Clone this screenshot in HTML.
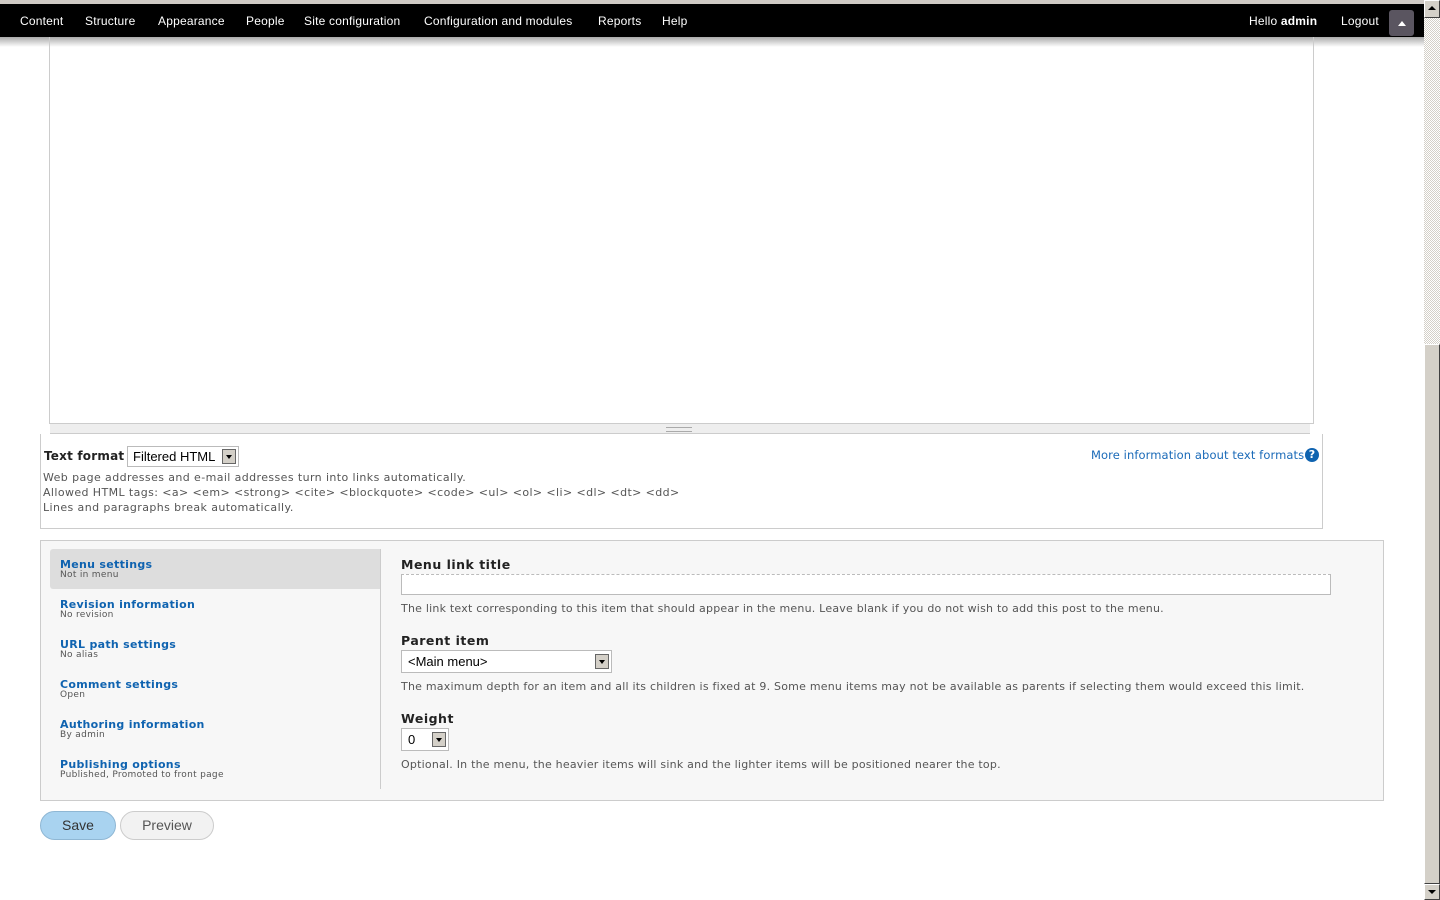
<!DOCTYPE html>
<html><head><style>
body{margin:0;width:1440px;height:900px;overflow:hidden;background:#fff;font-family:"DejaVu Sans","Liberation Sans",sans-serif;position:relative}
.a{position:absolute}
#tb{left:0;top:0;width:1424px;height:37px;background:#000;border-top:4px solid #cfcac5;box-sizing:border-box}
#tb span{position:absolute;top:10px;color:#fff;font-size:12px;font-family:"Liberation Sans",sans-serif;letter-spacing:.2px}
.sh{left:0;top:37px;width:1424px;height:10px;background:linear-gradient(#aaa,#fff)}
.desc{font-size:11px;color:#555;letter-spacing:.4px}
.d2{letter-spacing:.22px}
.tab b{display:block;color:#0f63b0;font-size:11px;letter-spacing:.3px}
.tab i{display:block;font-style:normal;font-size:9px;color:#555;line-height:9px;letter-spacing:.3px}
.lbl{font-size:12.5px;font-weight:bold;color:#222;letter-spacing:.5px}
.sel{border:1px solid #bbb;background:#fff;font-family:"Liberation Sans",sans-serif;font-size:13px;box-sizing:border-box}
.arr{position:absolute;right:2px;top:2px;width:14px;height:15px;background:#d4d0c8;border:1px solid #666;box-sizing:border-box}
.arr:after{content:"";position:absolute;left:3px;top:5px;border:3px solid transparent;border-top:4px solid #000}
</style></head><body>
<div id="tb" class="a">
<span style="left:20px">Content</span><span style="left:85px">Structure</span><span style="left:158px">Appearance</span><span style="left:246px">People</span><span style="left:304px">Site configuration</span><span style="left:424px">Configuration and modules</span><span style="left:598px">Reports</span><span style="left:662px">Help</span>
<span style="left:1249px">Hello <b>admin</b></span><span style="left:1341px">Logout</span>
<div class="a" style="left:1389px;top:6px;width:25px;height:26px;background:#5a5560;border-radius:3px"><div class="a" style="left:9px;top:11px;border:4px solid transparent;border-bottom:5px solid #fff;border-top:0"></div></div>
</div>
<div class="a sh"></div>
<div class="a" style="left:49px;top:37px;width:1265px;height:387px;border:1px solid #ccc;border-top:0;box-sizing:border-box"></div>
<div class="a" style="left:50px;top:424px;width:1260px;height:10px;background:#eee;border-bottom:1px solid #ccc;box-sizing:border-box"><div class="a" style="left:616px;top:3px;width:26px;height:3px;border-top:1px solid #aaa;border-bottom:1px solid #aaa"></div></div>
<div class="a" style="left:40px;top:434px;width:1283px;height:95px;border:1px solid #ccc;border-top:0;box-sizing:border-box"></div>
<div class="a lbl" style="left:44px;top:449px;letter-spacing:.2px;font-size:12px">Text format</div>
<div class="a sel" style="left:127px;top:446px;width:112px;height:21px;padding:2px 5px">Filtered HTML<div class="arr"></div></div>
<div class="a desc" style="left:43px;top:470px;line-height:15px">Web page addresses and e-mail addresses turn into links automatically.<br>Allowed HTML tags: &lt;a&gt; &lt;em&gt; &lt;strong&gt; &lt;cite&gt; &lt;blockquote&gt; &lt;code&gt; &lt;ul&gt; &lt;ol&gt; &lt;li&gt; &lt;dl&gt; &lt;dt&gt; &lt;dd&gt;<br>Lines and paragraphs break automatically.</div>
<div class="a" style="left:1091px;top:448px;font-size:11.5px;color:#1a6ab8;letter-spacing:.1px">More information about text formats</div>
<div class="a" style="left:1305px;top:448px;width:14px;height:14px;border-radius:50%;background:#0f63b0;color:#fff;font-size:11px;font-weight:bold;text-align:center;line-height:14px">?</div>
<div class="a" style="left:40px;top:540px;width:1344px;height:261px;border:1px solid #ccc;background:#f7f7f7;box-sizing:border-box"></div>
<div class="a" style="left:50px;top:549px;width:330px;height:40px;background:#ddd;border-radius:3px 0 0 3px"></div>
<div class="a" style="left:380px;top:549px;width:1px;height:240px;background:#ccc"></div>
<div class="a tab" style="left:60px;top:558px"><b>Menu settings</b><i>Not in menu</i></div>
<div class="a tab" style="left:60px;top:598px"><b>Revision information</b><i>No revision</i></div>
<div class="a tab" style="left:60px;top:638px"><b>URL path settings</b><i>No alias</i></div>
<div class="a tab" style="left:60px;top:678px"><b>Comment settings</b><i>Open</i></div>
<div class="a tab" style="left:60px;top:718px"><b>Authoring information</b><i>By admin</i></div>
<div class="a tab" style="left:60px;top:758px"><b>Publishing options</b><i>Published, Promoted to front page</i></div>
<div class="a lbl" style="left:401px;top:557px">Menu link title</div>
<div class="a" style="left:401px;top:574px;width:930px;height:21px;border:1px solid #bbb;border-top-style:dashed;background:#fff;box-sizing:border-box"></div>
<div class="a desc d2" style="left:401px;top:602px">The link text corresponding to this item that should appear in the menu. Leave blank if you do not wish to add this post to the menu.</div>
<div class="a lbl" style="left:401px;top:633px">Parent item</div>
<div class="a sel" style="left:401px;top:650px;width:211px;height:23px;padding:3px 6px">&lt;Main menu&gt;<div class="arr" style="top:3px"></div></div>
<div class="a desc d2" style="left:401px;top:680px">The maximum depth for an item and all its children is fixed at 9. Some menu items may not be available as parents if selecting them would exceed this limit.</div>
<div class="a lbl" style="left:401px;top:711px">Weight</div>
<div class="a sel" style="left:401px;top:728px;width:48px;height:23px;padding:3px 6px">0<div class="arr" style="top:3px"></div></div>
<div class="a desc d2" style="left:401px;top:758px">Optional. In the menu, the heavier items will sink and the lighter items will be positioned nearer the top.</div>
<div class="a" style="left:40px;top:811px;width:76px;height:29px;border-radius:15px;background:#a9d3f0;border:1px solid #8fb7d4;box-sizing:border-box;font-size:14px;color:#333;text-align:center;line-height:27px;font-family:'Liberation Sans',sans-serif">Save</div>
<div class="a" style="left:120px;top:811px;width:94px;height:29px;border-radius:15px;background:#f2f2f2;border:1px solid #ccc;box-sizing:border-box;font-size:14px;color:#555;text-align:center;line-height:27px;font-family:'Liberation Sans',sans-serif">Preview</div>
<div class="a" style="left:1424px;top:0;width:16px;height:900px;background:#ecebe8"></div>
<div class="a" style="left:1424px;top:18px;width:16px;height:326px;background:repeating-conic-gradient(#fff 0 25%,#d4d0c8 0 50%) 0 0/2px 2px"></div>
<div class="a" style="left:1424px;top:344px;width:16px;height:540px;background:#d4d0c8;border:1px solid #fff;border-right-color:#404040;border-bottom-color:#404040;box-sizing:border-box"></div>
<div class="a" style="left:1424px;top:0;width:16px;height:18px;background:#d4d0c8;border:1px solid #fff;border-right-color:#404040;border-bottom-color:#404040;box-sizing:border-box"><div class="a" style="left:3px;top:5px;border:4px solid transparent;border-bottom:4px solid #000;border-top:0"></div></div>
<div class="a" style="left:1424px;top:884px;width:16px;height:16px;background:#d4d0c8;border:1px solid #fff;border-right-color:#404040;border-bottom-color:#404040;box-sizing:border-box"><div class="a" style="left:3px;top:5px;border:4px solid transparent;border-top:4px solid #000;border-bottom:0"></div></div>
</body></html>
